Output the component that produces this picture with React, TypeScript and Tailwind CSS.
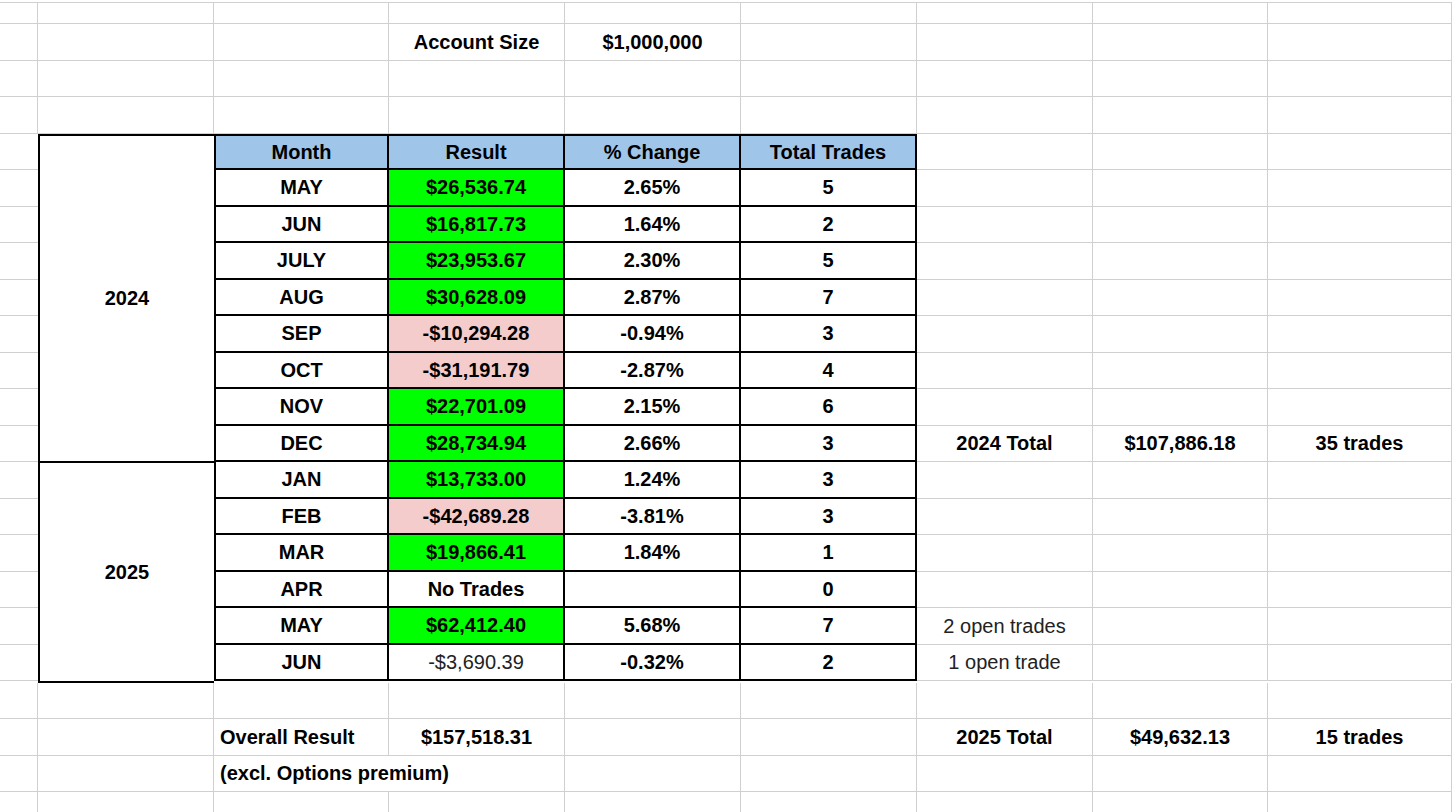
import React from 'react';

const G = 'border-[#d0d0d0]';
const rows24: [string, string, string, string, string][] = [
  ['MAY', '$26,536.74', '2.65%', '5', 'g'],
  ['JUN', '$16,817.73', '1.64%', '2', 'g'],
  ['JULY', '$23,953.67', '2.30%', '5', 'g'],
  ['AUG', '$30,628.09', '2.87%', '7', 'g'],
  ['SEP', '-$10,294.28', '-0.94%', '3', 'r'],
  ['OCT', '-$31,191.79', '-2.87%', '4', 'r'],
  ['NOV', '$22,701.09', '2.15%', '6', 'g'],
  ['DEC', '$28,734.94', '2.66%', '3', 'g'],
  ['JAN', '$13,733.00', '1.24%', '3', 'g'],
  ['FEB', '-$42,689.28', '-3.81%', '3', 'r'],
  ['MAR', '$19,866.41', '1.84%', '1', 'g'],
  ['APR', 'No Trades', '', '0', 'n'],
  ['MAY', '$62,412.40', '5.68%', '7', 'g'],
  ['JUN', '-$3,690.39', '-0.32%', '2', 'p'],
];

const outside: Record<number, [React.ReactNode, React.ReactNode, React.ReactNode]> = {
  7: [<b>2024 Total</b>, <b>$107,886.18</b>, <b>35 trades</b>],
  12: [<span className="font-normal text-[#222]">2 open trades</span>, '', ''],
  13: [<span className="font-normal text-[#222]">1 open trade</span>, '', ''],
};

function GCell({ w, children, left }: { w: string; children?: React.ReactNode; left?: boolean }) {
  return (
    <div className={`${w} shrink-0 h-full border-r border-b ${G} flex items-center ${left ? 'justify-start pl-[6px]' : 'justify-center'} whitespace-nowrap overflow-visible`}>
      {children}
    </div>
  );
}

function GrayRow({ h = 'h-[36.5px]', c = [] as React.ReactNode[], leftIdx = -1 }) {
  const W = ['w-[38px]', 'w-[176px]', 'w-[175px]', 'w-[176px]', 'w-[176px]', 'w-[176px]', 'w-[176px]', 'w-[175px]', 'flex-1'];
  return (
    <div className={`flex ${h}`}>
      {W.map((w, i) => (
        <GCell key={i} w={w} left={i === leftIdx}>{c[i]}</GCell>
      ))}
    </div>
  );
}

export default function App() {
  return (
    <div className="w-[1452px] h-[812px] overflow-hidden bg-white text-black font-bold text-[20px]" style={{ fontFamily: '"Liberation Sans", Arial, sans-serif' }}>
      <div className={`h-[3px] border-b ${G}`} />
      <GrayRow h="h-[21px]" />
      <GrayRow c={['', '', '', 'Account Size', '$1,000,000']} />
      <GrayRow />
      <GrayRow />
      <div className="flex">
        <div className="w-[38px] shrink-0">
          {Array.from({ length: 15 }).map((_, i) => (
            <div key={i} className={`h-[36.5px] border-b ${G}`} />
          ))}
        </div>
        <div className="w-[176px] shrink-0 flex flex-col">
          <div className="h-[329px] border-2 border-r-0 border-black flex items-center justify-center">2024</div>
          <div className="h-[220px] border-2 border-t-0 border-r-0 border-black flex items-center justify-center">2025</div>
        </div>
        <div className="flex-1 flex flex-col">
          <div className="flex h-[36.5px]">
            {['Month', 'Result', '% Change', 'Total Trades'].map((t, i) => (
              <div key={i} className={`${i === 1 || i === 3 ? 'w-[176px]' : i === 0 ? 'w-[175px]' : 'w-[176px]'} shrink-0 bg-[#9fc5e8] border-t-2 border-b-2 border-r-2 ${i === 0 ? 'border-l-2' : ''} border-black flex items-center justify-center`}>{t}</div>
            ))}
            <GCell w="w-[176px]" /><GCell w="w-[175px]" /><GCell w="flex-1" />
          </div>
          {rows24.map((r, i) => {
            const bg = r[4] === 'g' ? 'bg-[#00ff00]' : r[4] === 'r' ? 'bg-[#f4cccc]' : 'bg-white';
            const o = outside[i] || ['', '', ''];
            return (
              <div key={i} className="flex h-[36.5px]">
                <div className="w-[175px] shrink-0 border-l-2 border-r-2 border-b-2 border-black flex items-center justify-center">{r[0]}</div>
                <div className={`w-[176px] shrink-0 border-r-2 border-b-2 border-black flex items-center justify-center ${bg} ${r[4] === 'p' ? 'font-normal text-[#222]' : ''}`}>{r[1]}</div>
                <div className="w-[176px] shrink-0 border-r-2 border-b-2 border-black flex items-center justify-center">{r[2]}</div>
                <div className="w-[176px] shrink-0 border-r-2 border-b-2 border-black flex items-center justify-center">{r[3]}</div>
                <GCell w="w-[176px]">{o[0]}</GCell>
                <GCell w="w-[175px]">{o[1]}</GCell>
                <GCell w="flex-1">{o[2]}</GCell>
              </div>
            );
          })}
        </div>
      </div>
      <GrayRow />
      <GrayRow c={['', '', 'Overall Result', '$157,518.31', '', '', '2025 Total', '$49,632.13', '15 trades']} leftIdx={2} />
      <div className="flex h-[36.5px]">
        <GCell w="w-[38px]" />
        <GCell w="w-[176px]" />
        <div className={`w-[351px] shrink-0 h-full border-r border-b ${G} flex items-center pl-[6px] whitespace-nowrap`}>(excl. Options premium)</div>
        <GCell w="w-[176px]" /><GCell w="w-[176px]" /><GCell w="w-[176px]" /><GCell w="w-[175px]" /><GCell w="flex-1" />
      </div>
      <GrayRow />
    </div>
  );
}
